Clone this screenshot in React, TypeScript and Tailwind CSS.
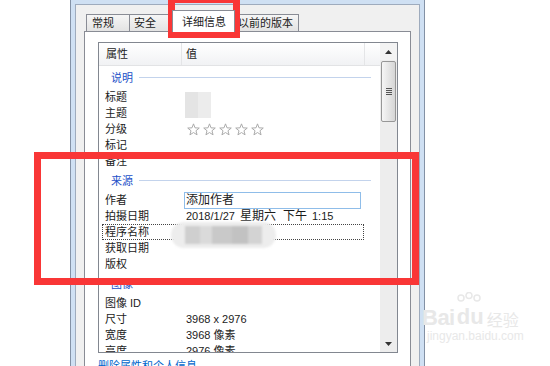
import React from "react";

const Star = () => (
  <svg width="13" height="13" viewBox="0 0 12 12" className="mr-[3px] shrink-0">
    <polygon
      points="6,0.8 7.41,4.46 11.33,4.67 8.28,7.14 9.29,10.93 6,8.8 2.71,10.93 3.72,7.14 0.67,4.67 4.59,4.46"
      fill="#fff"
      stroke="#a9a9a9"
      strokeWidth="0.9"
      strokeLinejoin="round"
    />
  </svg>
);

function Row({ label, children, focus }: { label: React.ReactNode; children?: React.ReactNode; focus?: boolean }) {
  return (
    <div className="relative flex h-[16px] items-center leading-[16px]">
      <div className="w-[83px] shrink-0 whitespace-nowrap pl-[6px]">{label}</div>
      <div className="flex flex-1 items-center whitespace-nowrap pl-[4px]">{children}</div>
      {focus && <div className="absolute left-[3px] top-0 h-[16px] w-[262px] border border-dotted border-[#444]" />}
    </div>
  );
}

function Section({ title }: { title: string }) {
  return (
    <div className="flex h-[23px] items-center pl-[12px] pr-[9px] leading-[16px]">
      <span className="text-[#2350c8]">{title}</span>
      <div className="ml-[6px] h-px flex-1 bg-[#c3d3ec]" />
    </div>
  );
}

export default function App() {
  return (
    <div className="relative h-[366px] w-[550px] overflow-hidden bg-white font-['Liberation_Sans','Noto_Sans_CJK_SC',sans-serif] text-[11px] text-[#1b1b1b]">
      {/* window */}
      <div className="ml-[70px] h-[366px] w-[355px] border-x border-[#8391a5] bg-[#cfe0f3] px-[4px] pt-[4px]">
        <div className="h-full border-x border-t border-[#9eabbd] bg-[#f0f0f0] pl-[8px] pr-[8px] pt-0">
          {/* tabs */}
          <div className="flex h-[26px] items-end pl-[2px]">
            <div className="flex h-[17px] w-[44px] items-center border-x border-t border-[#898c95] bg-linear-to-b from-[#f6f6f6] to-[#e3e3e3] pl-[5px] leading-[16px]">常规</div>
            <div className="flex h-[17px] w-[42px] items-center border-r border-t border-[#898c95] bg-linear-to-b from-[#f6f6f6] to-[#e3e3e3] pl-[4px] leading-[16px]">安全</div>
            <div className="relative z-10 -mb-px flex h-[22px] w-[63px] items-center border-x border-t border-[#898c95] bg-white pl-[9px] leading-[16px]">详细信息</div>
            <div className="flex h-[17px] w-[64px] items-center border-r border-t border-[#898c95] bg-linear-to-b from-[#f6f6f6] to-[#e3e3e3] pl-[3px] leading-[16px]">以前的版本</div>
          </div>
          {/* panel */}
          <div className="h-[400px] border border-[#898c95] bg-white pl-[13px] pr-[12px] pt-[10px]">
            <div className="flex h-[311px] w-[300px] border border-[#828790] bg-white">
              {/* content */}
              <div className="w-[281px] overflow-hidden">
                <div className="flex h-[23px] border-b border-[#e2e3e5] bg-linear-to-b from-white to-[#f1f2f4] leading-[16px]">
                  <div className="flex w-[83px] items-center border-r border-[#e4e5e7] pl-[7px]">属性</div>
                  <div className="flex w-[183px] items-center border-r border-[#e4e5e7] pl-[4px]">值</div>
                  <div className="flex-1" />
                </div>
                <Section title="说明" />
                <Row label="标题" />
                <Row label="主题" />
                <Row label="分级">
                  <div className="flex items-center pl-[1px]">
                    <Star />
                    <Star />
                    <Star />
                    <Star />
                    <Star />
                  </div>
                </Row>
                <Row label="标记" />
                <Row label="备注" />
                <Section title="来源" />
                <Row label="作者">
                  <div className="-ml-[2px] flex h-[17px] w-[177px] items-center border border-[#8fbde9] pl-[1px] text-[12px]">添加作者</div>
                </Row>
                <Row label="拍摄日期">
                  <span>2018/1/27</span>
                  <span className="ml-[5px] text-[12px]">星期六</span>
                  <span className="ml-[7px] text-[12px]">下午</span>
                  <span className="ml-[5px]">1:15</span>
                </Row>
                <Row label="程序名称" focus />
                <Row label="获取日期" />
                <Row label="版权" />
                <Section title="图像" />
                <Row label={<span>图像 ID</span>} />
                <Row label="尺寸">
                  <span>3968 x 2976</span>
                </Row>
                <Row label="宽度">
                  <span>3968 像素</span>
                </Row>
                <Row label="高度">
                  <span>2976 像素</span>
                </Row>
              </div>
              {/* scrollbar */}
              <div className="flex w-[17px] flex-col bg-[#ededed]">
                <div className="flex h-[17px] items-center justify-center bg-[#f3f3f3]">
                  <svg width="7" height="4" viewBox="0 0 7 4">
                    <polygon points="3.5,0 7,4 0,4" fill="#333" />
                  </svg>
                </div>
                <div className="mx-[1px] mt-[1px] flex h-[61px] flex-col items-center justify-center gap-[1px] rounded-[2px] border border-[#979797] bg-linear-to-r from-[#f6f6f6] to-[#d6d6d6]">
                  <div className="h-px w-[6px] bg-[#555]" />
                  <div className="h-px w-[6px] bg-[#555]" />
                  <div className="h-px w-[6px] bg-[#555]" />
                  <div className="h-px w-[6px] bg-[#555]" />
                </div>
                <div className="flex-1" />
                <div className="flex h-[17px] items-center justify-center">
                  <svg width="7" height="4" viewBox="0 0 7 4">
                    <polygon points="0,0 7,0 3.5,4" fill="#333" />
                  </svg>
                </div>
              </div>
            </div>
            <div className="mt-[5px] leading-[16px] text-[#0066cc]">删除属性和个人信息</div>
          </div>
        </div>
      </div>

      {/* blurred overlays */}
      <div className="absolute left-[185px] top-[92px] flex h-[26px] w-[26px]">
        <div className="flex-1 bg-[#e4e4e4]" />
        <div className="flex-1 bg-[#ececec]" />
      </div>
      <div className="absolute left-[171px] top-[222px] flex h-[26px] w-[105px] items-center overflow-hidden rounded-full bg-[#ededed] blur-[1px]">
        <div className="ml-[14px] h-[18px] w-[15px] bg-[#cfcfcf]" />
        <div className="h-[18px] w-[12px] bg-[#dadada]" />
        <div className="h-[18px] w-[20px] bg-[#c9c9c9]" />
        <div className="h-[18px] w-[16px] bg-[#c2c2c2]" />
        <div className="h-[18px] w-[14px] bg-[#d3d3d3]" />
      </div>

      {/* annotation red boxes */}
      <div className="absolute left-[168px] top-[-4px] h-[42px] w-[72px] border-[7px] border-[#f93636]" />
      <div className="absolute left-[34px] top-[152px] h-[133px] w-[385px] border-[7px] border-[#f93636]" />

      {/* watermark */}
      <div className="absolute left-[422px] top-[306px] flex flex-col text-[#e8e8e8]">
        <div className="flex items-end">
          <span className="text-[22px] font-bold leading-[22px] tracking-[-0.5px]">Bai</span>
          <div className="relative">
            <svg width="30" height="34" viewBox="0 0 30 34" className="absolute -top-[14px] left-0">
              <circle cx="6" cy="6" r="3" fill="none" stroke="#e8e8e8" strokeWidth="1.5" />
              <circle cx="14" cy="3.5" r="3" fill="none" stroke="#e8e8e8" strokeWidth="1.5" />
              <circle cx="22" cy="6" r="3" fill="none" stroke="#e8e8e8" strokeWidth="1.5" />
            </svg>
            <span className="ml-[2px] text-[22px] font-bold leading-[22px]">du</span>
          </div>
          <span className="ml-[3px] font-['Noto_Sans_CJK_SC',sans-serif] text-[16px] leading-[20px]">经验</span>
        </div>
        <span className="ml-[5px] text-[12px] leading-[14px]">jingyan.baidu.com</span>
      </div>
    </div>
  );
}
